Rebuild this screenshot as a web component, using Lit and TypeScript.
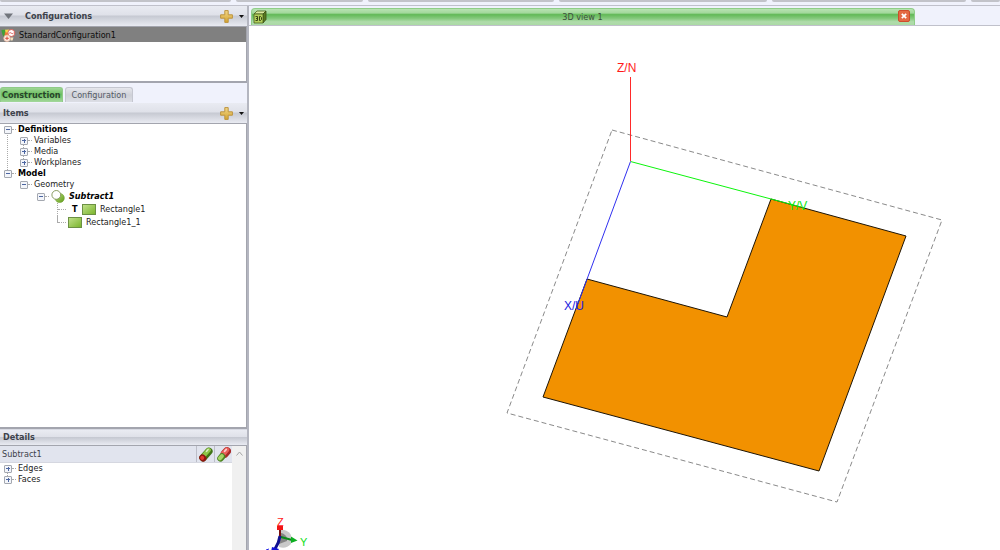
import { LitElement, html, css, svg, nothing, TemplateResult } from "lit";
import { customElement, property, state } from "lit/decorators.js";
import { classMap } from "lit/directives/class-map.js";

const plusIcon = html`<svg class="plus" width="13" height="13" viewBox="0 0 13 13" aria-hidden="true">
  <defs><linearGradient id="gold" x1="0" y1="0" x2="0" y2="1"><stop offset="0" stop-color="#f3d88a" /><stop offset="1" stop-color="#d3a32e" /></linearGradient></defs>
  <path d="M4.800 .6h3.400v4.200h4.200v3.400h-4.200v4.200H4.800v-4.200H.6V4.800h4.200z" fill="url(#gold)" stroke="#bd9440" stroke-width="1" stroke-linejoin="round" />
</svg>`;

const caretIcon = html`<svg class="caret" width="5" height="3" viewBox="0 0 5 3" aria-hidden="true"><path d="M0 0h5L2.500 3z" fill="#111" /></svg>`;

const configIcon = html`<svg width="15" height="13" viewBox="0 0 15 13" aria-hidden="true">
  <path d="M1 1L8 .5v6L4 8z" fill="#f5d34c" />
  <path d="M.5 1l3.500-.5 1 6.500-1.500 1.500C1.500 6.500 .8 4 .5 1z" fill="#3fa03a" />
  <path d="M4 3l3 1-1 4-2.500-1z" fill="#ee7a3a" />
  <circle cx="10.300" cy="4" r="3.500" fill="#fff" stroke="#d9574d" stroke-width=".9" />
  <path d="M8 4.500c1.500-2.500 2.500 1.500 4.500-.5" fill="none" stroke="#d04a44" stroke-width=".9" />
  <circle cx="6" cy="9.300" r="3.200" fill="#fdf3ea" stroke="#e9b49c" stroke-width=".8" />
  <path d="M6 7.500v3.600M4.200 9.300h3.600" stroke="#dd4a3c" />
  <path d="M9.500 8.500h3l-1 3h-2z" fill="#f7e4c0" />
</svg>`;

const subtractIcon = html`<svg width="14" height="13" viewBox="0 0 14 13" aria-hidden="true">
  <defs><linearGradient id="leaf" x1="0" y1="0" x2="1" y2="1"><stop offset="0" stop-color="#b9dc7c" /><stop offset="1" stop-color="#5f9c17" /></linearGradient></defs>
  <circle cx="8.700" cy="8" r="4.600" fill="url(#leaf)" stroke="#6d9d33" stroke-width=".6" />
  <circle cx="5.300" cy="4.900" r="4.400" fill="#fff" stroke="#7d9352" stroke-width=".9" />
</svg>`;

const rectIcon = html`<svg width="14" height="11" viewBox="0 0 14 11" aria-hidden="true">
  <defs><linearGradient id="grass" x1="0" y1="0" x2="1" y2="1"><stop offset="0" stop-color="#c3e28e" /><stop offset="1" stop-color="#78b32a" /></linearGradient></defs>
  <rect x=".5" y=".5" width="13" height="10" fill="url(#grass)" stroke="#6c9044" />
</svg>`;

const nearIcon = html`<svg width="14" height="15" viewBox="0 0 14 15" aria-hidden="true">
  <g transform="rotate(-48 7 7.500)">
    <rect x="-1" y="3.800" width="16" height="7.400" rx="3.700" fill="#3f7416" />
    <rect x="3" y="4.300" width="11.300" height="4.400" rx="2.200" fill="#8ec548" />
    <ellipse cx="10.800" cy="5.800" rx="2.200" ry=".8" fill="#fff" opacity=".7" />
    <rect x="-1" y="3.800" width="6.500" height="7.400" rx="3.200" fill="#8e1410" />
    <rect x="0" y="4.900" width="4" height="4" rx="2" fill="#e03a32" />
  </g>
</svg>`;

const farIcon = html`<svg width="14" height="15" viewBox="0 0 14 15" aria-hidden="true">
  <g transform="rotate(-48 7 7.500)">
    <rect x="4" y="3.500" width="11.500" height="8" rx="4" fill="#a82a28" />
    <rect x="5" y="4" width="9.800" height="5" rx="2.500" fill="#ea5f5a" />
    <ellipse cx="11" cy="5.800" rx="2.300" ry=".9" fill="#fff" opacity=".7" />
    <rect x="-1.500" y="4.200" width="9" height="6.600" rx="3.300" fill="#4c8420" />
    <rect x="-.6" y="5" width="7" height="4" rx="2" fill="#a6d566" />
  </g>
</svg>`;

const cubeIcon = html`<svg width="14" height="14" viewBox="0 0 14 14" aria-hidden="true">
  <path d="M1 4l3-3h9l-3 3z" fill="#dbe9a0" stroke="#49601c" stroke-width=".8" />
  <path d="M10 4l3-3v8.500l-3 3.500z" fill="#587a1f" stroke="#3a4f15" stroke-width=".8" />
  <path d="M1 4h9v9H1z" fill="#b3cf5c" stroke="#49601c" stroke-width=".8" />
  <path d="M2.500 6.500h2v4h-2M3 8.500h1.500M6.500 6.500v4h1l1-1v-2l-1-1z" fill="none" stroke="#2c3a10" stroke-width=".9" />
</svg>`;

interface Item {
  label: string;
  kind?: "root" | "part";
  icon?: TemplateResult;
  mark?: string;
  open?: boolean;
  closed?: boolean;
  children?: Item[];
}

const model: Item[] = [
  {
    label: "Definitions", kind: "root", open: true,
    children: [{ label: "Variables", closed: true }, { label: "Media", closed: true }, { label: "Workplanes", closed: true }],
  },
  {
    label: "Model", kind: "root", open: true,
    children: [{
      label: "Geometry", open: true,
      children: [{
        label: "Subtract1", kind: "part", icon: subtractIcon, open: true,
        children: [{ label: "Rectangle1", icon: rectIcon, mark: "T" }, { label: "Rectangle1_1", icon: rectIcon }],
      }],
    }],
  },
];

const details: Item[] = [{ label: "Edges", closed: true }, { label: "Faces", closed: true }];

@customElement("item-tree")
export class ItemTree extends LitElement {
  static styles = css`
    :host { display: block; }
    ul { list-style: none; margin: 0; padding: 0; }
    ul ul { padding-left: 16px; }
    ul ul ul { padding-left: 17px; }
    li { position: relative; }
    li:not(:last-child)::before {
      content: ""; position: absolute; left: 7px; top: 6px; bottom: -6px; border-left: 1px dotted #aaa;
    }
    .row { display: flex; align-items: center; height: 11px; white-space: nowrap; }
    .tall { height: 13px; }
    .box {
      position: relative; flex: none; width: 8px; height: 8px; margin: 0 0 0 4px; padding: 0;
      border: 1px solid #a4a8b0; border-radius: 1px; background: #f3f5fa; box-sizing: border-box;
    }
    .box::before, .shut::after { content: ""; position: absolute; background: #4c66a2; }
    .box::before { top: 2px; left: 1px; width: 4px; height: 1px; }
    .shut::after { top: 1px; left: 3px; width: 1px; height: 4px; }
    .dash { flex: none; width: 4px; margin-right: 2px; border-top: 1px dotted #aaa; }
    .leaf { width: 8px; margin: 0 2px 0 8px; }
    .stem { position: absolute; left: 7px; top: 0; height: 7px; border-left: 1px dotted #aaa; }
    .mark { width: 10px; margin-left: 4px; font-weight: bold; color: #000; }
    svg { flex: none; margin-right: 4px; }
    .root { font-weight: bold; color: #000; }
    .part { font-weight: bold; font-style: italic; color: #000; }
  `;
  @property({ attribute: false }) items: Item[] = [];
  @state() private shut = new Set<Item>();

  private toggle(item: Item) {
    const next = new Set(this.shut);
    next.has(item) ? next.delete(item) : next.add(item);
    this.shut = next;
  }

  private branch(items: Item[]): TemplateResult {
    return html`<ul>${items.map((item) => {
      const branch = item.open || item.closed;
      const shut = item.closed || this.shut.has(item);
      return html`<li>
        <div class=${classMap({ row: true, tall: !!item.icon })}>
          ${branch
            ? html`<button class=${classMap({ box: true, shut: !!shut })} aria-label="Toggle ${item.label}" @click=${() => this.toggle(item)}></button><span class="dash"></span>`
            : html`<span class="stem"></span><span class="dash leaf"></span>`}
          ${item.mark ? html`<span class="mark">${item.mark}</span>` : nothing}
          ${item.icon ?? nothing}<span class=${item.kind ?? "plain"}>${item.label}</span>
        </div>
        ${item.children && !shut ? this.branch(item.children) : nothing}
      </li>`;
    })}</ul>`;
  }

  render() { return this.branch(this.items); }
}

@customElement("model-view")
export class ModelView extends LitElement {
  static styles = css`
    :host { display: block; background: #fff; min-height: 0; overflow: hidden; }
    svg { display: block; width: 100%; height: 100%; font-family: "Liberation Sans", Arial, sans-serif; font-size: 12px; }
    .small { font-size: 11px; }
  `;
  render() {
    return html`<svg viewBox="249 26 751 524" role="img" aria-label="Model geometry">
      ${svg`
      <path d="M771 199L906 236 819 471 543 397 587 279 727 317z" fill="#f29100" stroke="#1d1405" />
      <path d="M612 130L942 220 837 502 507 413z" fill="none" stroke="#8a8a8a" stroke-dasharray="5 3" />
      <path d="M630.500 161V77" stroke="#ff2a2a" fill="none" />
      <path d="M630.500 161.500L801 207" stroke="#0cf50c" fill="none" />
      <path d="M630.500 161.500L576 309" stroke="#3030f0" fill="none" />
      <text x="617" y="72" fill="#ff1a1a">Z/N</text>
      <text x="788" y="210" fill="#10e810">Y/V</text>
      <text x="564" y="310" fill="#1c1ce0">X/U</text>
      <path d="M280 530a10 9 0 0 1 11 5v9a11 10 0 0 1-12 3z" fill="#c9c9c9" />
      <path d="M281 533a8 8 0 0 1 6 5v3l-8 3z" fill="#858585" />
      <path d="M280 537V529" stroke="#7a1010" stroke-width="2" />
      <path d="M277 526h6v4h-6z" fill="#f01515" />
      <path d="M281 537l11 3" stroke="#0a8a18" stroke-width="2" />
      <path d="M291 536.500l6.500 4-6.500 2.500z" fill="#0cae20" />
      <path d="M280 536q-1 7-5 13" fill="none" stroke="#101090" stroke-width="3" />
      <path d="M272 547l7 2-2 3h-6z" fill="#1212d8" />
      <path d="M266 550l3-1" stroke="#2020e8" />
      <text class="small" x="277" y="526" fill="#ff1a1a">Z</text>
      <text class="small" x="300" y="546" fill="#10e020">Y</text>`}
    </svg>`;
  }
}

@customElement("app-root")
export class AppRoot extends LitElement {
  static styles = css`
    :host {
      display: flex; flex-direction: column; height: 100vh; overflow: hidden; background: #f0f2fc;
      font-family: "DejaVu Sans Condensed", Tahoma, sans-serif; font-size: 9px; line-height: 11px; color: #222;
    }
    * { box-sizing: border-box; }
    button { font: inherit; color: inherit; margin: 0; padding: 0; border: 0; background: none; }
    h2 { margin: 0; font-size: 9px; line-height: 11px; font-weight: bold; color: #3d424b; }
    .toolbar { display: flex; gap: 5px; flex: none; height: 6px; border-bottom: 1px solid #c0c1cb; }
    .group { height: 2px; background: #c2c3c9; border-radius: 0 0 3px 3px; }
    .g1 { flex: 231; } .g2 { flex: 127; } .g3 { flex: 186; } .g4 { flex: 208; } .g5 { flex: 194; } .g6 { flex: 29; }
    .body { display: flex; flex: 1; min-height: 0; }
    .side { display: flex; flex-direction: column; flex: none; width: 249px; border-right: 2px solid #b4b6c0; }
    .head {
      display: flex; align-items: center; flex: none; height: 20px; padding: 0 3px; gap: 6px;
      background: linear-gradient(#e9ebf2 0, #dfe1e9 45%, #c6c9d2 50%, #e9ebf2 100%);
    }
    .head h2 { flex: 1; }
    .fold { display: flex; width: 16px; padding-left: 1px; }
    .add, .more { display: flex; align-items: center; height: 14px; }
    .panel { background: #fff; border: solid #a3a5ae; border-width: 1px 1px 2px 0; }
    .configs { flex: none; height: 57px; }
    .entry { display: flex; align-items: center; gap: 3px; width: 100%; height: 15px; padding: 1px 0 0 1px; background: #808080; color: #0c0c0c; }
    .tabs { display: flex; gap: 2px; flex: none; height: 20px; padding-top: 4px; }
    .tab {
      height: 15px; padding: 0 6px; border-radius: 3px 3px 0 0; color: #555b66;
      background: linear-gradient(#e6e7ed, #cfd1d8 50%, #dcdee5); border: 1px solid #c5c7d0; border-bottom: 0;
    }
    .on { padding: 0 1px; font-weight: bold; color: #27452a; background: linear-gradient(#9ed695, #6cbf60 45%, #a4d89c); border-color: #8fca87; }
    .items { flex: 1; min-height: 0; }
    .gap { flex: none; height: 1px; background: #d7d9e2; }
    .low { height: 15px; }
    .detail { display: flex; flex: none; height: 105px; background: #fff; border: solid #a3a5ae; border-width: 1px 1px 0 0; }
    .main { flex: 1; min-width: 0; }
    .title { display: flex; align-items: stretch; height: 17px; background: #e1e4ee; border-bottom: 1px solid #d5d7e0; }
    .name { flex: 1; padding: 3px 2px 0; color: #3d424b; }
    .tool { display: flex; align-items: center; justify-content: center; width: 18px; border-left: 1px solid #bcbec8; }
    .scroll { display: flex; flex: none; justify-content: center; width: 14px; padding-top: 5px; background: #f0f0f0; }
    .work { display: flex; flex-direction: column; flex: 1; min-width: 0; background: #fff; }
    .strip { display: flex; flex: none; height: 20px; padding: 2px 85px 0 2px; background: #f0f2fc; border-bottom: 1px solid #c0c1cb; }
    .view {
      display: flex; align-items: center; flex: 1; padding: 0 4px 0 1px; border-radius: 4px 4px 0 0; color: #3c4f3c;
      border: 1px solid #8fce87; border-width: 1px 1px 0;
      background: linear-gradient(#b9e3b3 0, #a2d89b 25%, #62b957 35%, #86ca7e 60%, #b0dcab 80%, #abdaa5 100%);
    }
    .view span { flex: 1; text-align: center; }
    .close { display: flex; align-items: center; justify-content: center; width: 12px; height: 12px; margin-bottom: 2px; border-radius: 2px; background: #e36a43; border: 1px solid #cf4c2b; }
    model-view { flex: 1; }
  `;
  @state() private tab = "Construction";

  private actions(what: string) {
    return html`<button class="add" aria-label="Add ${what}">${plusIcon}</button><button class="more" aria-label="More ${what} actions">${caretIcon}</button>`;
  }

  render() {
    return html`
      <div class="toolbar">${[1, 2, 3, 4, 5, 6].map((n) => html`<div class="group g${n}"></div>`)}</div>
      <div class="body">
        <aside class="side">
          <div class="head">
            <button class="fold" aria-label="Collapse configurations"><svg width="9" height="6" viewBox="0 0 9 6"><path d="M0 .5h9L4.500 6z" fill="#71757c" /></svg></button>
            <h2>Configurations</h2>${this.actions("configuration")}
          </div>
          <div class="panel configs"><button class="entry">${configIcon}<span>StandardConfiguration1</span></button></div>
          <div class="tabs" role="tablist">
            ${["Construction", "Configuration"].map((t) => html`<button role="tab" aria-selected=${this.tab === t}
              class=${classMap({ tab: true, on: this.tab === t })} @click=${() => (this.tab = t)}>${t}</button>`)}
          </div>
          <div class="head"><h2>Items</h2>${this.actions("item")}</div>
          <div class="panel items"><item-tree .items=${model}></item-tree></div>
          <div class="gap"></div>
          <div class="head low"><h2>Details</h2></div>
          <div class="detail">
            <div class="main">
              <div class="title">
                <div class="name">Subtract1</div>
                <button class="tool" aria-label="Select near">${nearIcon}</button>
                <button class="tool" aria-label="Select far">${farIcon}</button>
              </div>
              <item-tree .items=${details}></item-tree>
            </div>
            <div class="scroll"><svg width="7" height="5" viewBox="0 0 7 5" aria-hidden="true"><path d="M.5 4.500l3-3.500 3 3.500" fill="none" stroke="#a5a5a5" /></svg></div>
          </div>
        </aside>
        <main class="work">
          <div class="strip">
            <div class="view">${cubeIcon}<span>3D view 1</span>
              <button class="close" aria-label="Close view"><svg width="6" height="6" viewBox="0 0 6 6"><path d="M.8 .8l4.400 4.400M5.200 .8L.8 5.200" stroke="#fff" stroke-width="1.700" /></svg></button>
            </div>
          </div>
          <model-view></model-view>
        </main>
      </div>`;
  }
}
